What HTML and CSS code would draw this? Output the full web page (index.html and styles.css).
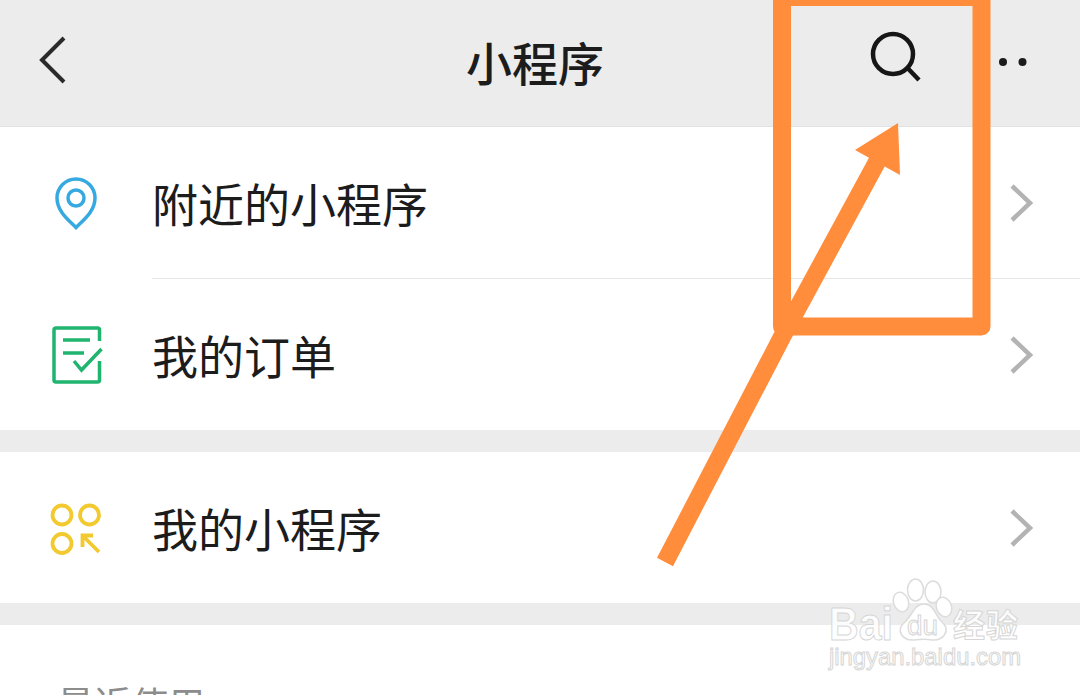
FILE: index.html
```html
<!DOCTYPE html>
<html lang="zh-CN">
<head>
<meta charset="utf-8">
<title>小程序</title>
<link rel="stylesheet" href="styles.css">
</head>
<body>
<div class="screen">
  <header class="topbar">
    <svg class="back" viewBox="0 0 60 60"><path d="M34 8 12 30l22 22"/></svg>
    <h1 class="title">小程序</h1>
    <svg class="search" viewBox="0 0 60 60"><circle cx="28" cy="27" r="20"/><path d="M42.500 41 54 53"/></svg>
    <svg class="more" viewBox="0 0 40 20"><circle cx="9" cy="10" r="4"/><circle cx="28.500" cy="10" r="4"/></svg>
  </header>

  <section class="group">
    <div class="row row-first">
      <svg class="icon icon-pin" viewBox="0 0 60 60"><path d="M30 53.500 C24 47 11 38 11 24 A19 19 0 0 1 49 24 C49 38 36 47 30 53.500Z"/><circle cx="30" cy="24" r="8"/></svg>
      <div class="row-body row-body-line"><span class="label">附近的小程序</span><svg class="chev" viewBox="0 0 30 40"><path d="M6 3 24 20 6 37"/></svg></div>
    </div>
    <div class="row">
      <svg class="icon icon-order" viewBox="0 0 60 60"><path d="M53.500 16V5a2 2 0 0 0-2-2H10A2 2 0 0 0 8 5v50a2 2 0 0 0 2 2h41.500a2 2 0 0 0 2-2V36"/><path d="M17 15H44M17 28H38"/><path d="M28 36 35.500 45 55.500 24"/></svg>
      <div class="row-body"><span class="label">我的订单</span><svg class="chev" viewBox="0 0 30 40"><path d="M6 3 24 20 6 37"/></svg></div>
    </div>
  </section>

  <section class="group">
    <div class="row">
      <svg class="icon icon-mine" viewBox="0 0 60 60"><circle cx="16" cy="17" r="9.500"/><circle cx="43.500" cy="17" r="9.500"/><circle cx="16" cy="45.500" r="9.500"/><path d="M53 54 38 39M36.500 49V37.500H47"/></svg>
      <div class="row-body"><span class="label">我的小程序</span><svg class="chev" viewBox="0 0 30 40"><path d="M6 3 24 20 6 37"/></svg></div>
    </div>
  </section>

  <section class="recent"><span class="recent-label">最近使用</span></section>

  <svg class="watermark" viewBox="0 0 1080 695">
    <g class="wm-paw">
      <ellipse cx="915.500" cy="590" rx="8" ry="11"/>
      <ellipse cx="933" cy="592" rx="8" ry="11"/>
      <ellipse cx="901" cy="602" rx="7.500" ry="10" transform="rotate(-20 901 602)"/>
      <ellipse cx="944" cy="607" rx="7.500" ry="10" transform="rotate(-20 944 607)"/>
      <path d="M924 604C934 604 936 617 942 622 952 631 942 641 932 640 926 639 921 639 914 640 904 641 894 631 905 622 912 616 914 604 924 604Z"/>
    </g>
    <text class="wm-text wm-bold" x="829" y="640" textLength="64" lengthAdjust="spacingAndGlyphs">Bai</text>
    <text class="wm-text wm-du" x="907" y="635" textLength="31" lengthAdjust="spacingAndGlyphs">du</text>
    <text class="wm-text wm-cjk" x="953" y="637" textLength="65">经验</text>
    <text class="wm-text wm-url" x="829" y="665" textLength="192" lengthAdjust="spacingAndGlyphs">jingyan.baidu.com</text>
  </svg>

  <svg class="annotation" viewBox="0 0 1080 695">
    <path class="ann-box" d="M782 -3H981.500V326.500H782Z"/>
    <path class="ann-line" d="M665 562 783 335 878 160"/>
    <path class="ann-head" d="M898 123 855 150 900 175Z"/>
  </svg>
</div>
</body>
</html>
```
FILE: styles.css
```css
* { box-sizing: border-box; }
html, body { margin: 0; padding: 0; }
body {
  width: 1080px;
  height: 695px;
  overflow: hidden;
  background: #ececec;
  font-family: "Noto Sans CJK SC", "Noto Sans", sans-serif;
  color: #1c1c1c;
}
.screen {
  position: relative;
  width: 1080px;
  height: 695px;
  overflow: hidden;
  display: flex;
  flex-direction: column;
}
.topbar {
  position: relative;
  flex: none;
  height: 127px;
  border-bottom: 1px solid #e2e2e2;
  background: #ececec;
  display: flex;
  align-items: center;
}
.title {
  position: absolute;
  left: 0;
  right: 0;
  top: 28px;
  margin: 0 0 0 -10px;
  text-align: center;
  font-size: 46px;
  line-height: 66px;
  font-weight: 500;
  color: #1c1c1c;
}
.back {
  flex: none;
  width: 60px;
  height: 60px;
  margin-left: 30px;
  margin-top: -6px;
  fill: none;
  stroke: #2a2a2a;
  stroke-width: 4;
}
.search {
  flex: none;
  width: 60px;
  height: 60px;
  margin-left: 775px;
  margin-top: -13px;
  fill: none;
  stroke: #161616;
  stroke-width: 4.500;
}
.more {
  flex: none;
  width: 40px;
  height: 20px;
  margin-left: 69px;
  margin-top: -3px;
  fill: #1c1c1c;
}
.group {
  flex: none;
  background: #fff;
  margin-bottom: 22px;
}
.row {
  height: 151px;
  display: flex;
  align-items: center;
  padding-left: 46px;
}
.row-first { height: 152px; }
.row-body {
  flex: 1;
  height: 100%;
  margin-left: 46px;
  padding-right: 44px;
  display: flex;
  align-items: center;
  justify-content: space-between;
}
.row-body-line {
  border-bottom: 1px solid #e6e6e6;
}
.icon {
  flex: none;
  width: 60px;
  height: 60px;
  fill: none;
  stroke-width: 3.500;
}
.icon-pin { stroke: #35a9e0; margin-top: 1px; }
.icon-order { stroke: #1fb56f; margin-top: 1px; }
.icon-mine { stroke: #f2c92e; stroke-width: 3.800; }
.label {
  font-size: 46px;
  line-height: 66px;
  color: #1c1c1c;
  margin-bottom: 2px;
}
.chev {
  flex: none;
  width: 30px;
  height: 40px;
  fill: none;
  stroke: #b3b3b3;
  stroke-width: 4.500;
}
.recent {
  flex: 1;
  background: #fff;
  padding: 51px 0 0 57px;
}
.recent-label {
  display: block;
  font-size: 37px;
  line-height: 54px;
  color: #8c8c8c;
}
.watermark, .annotation {
  position: absolute;
  left: 0;
  top: 0;
  width: 1080px;
  height: 695px;
  pointer-events: none;
}
.wm-paw ellipse, .wm-paw path {
  fill: #fff;
  stroke: #dcdcdc;
  stroke-width: 1.500;
}
.wm-text {
  fill: rgba(255, 255, 255, 0.9);
  stroke: #d6d6d6;
  stroke-width: 1;
  font-family: "Liberation Sans", sans-serif;
}
.wm-bold { font-size: 46px; font-weight: 700; }
.wm-du { font-size: 27px; }
.wm-cjk { font-size: 32px; font-weight: 700; font-family: "Noto Sans CJK SC", sans-serif; }
.wm-url { font-size: 24px; }
.ann-box {
  fill: none;
  stroke: #ff8d3c;
  stroke-width: 18;
  stroke-linejoin: round;
}
.ann-line {
  fill: none;
  stroke: #ff8d3c;
  stroke-width: 18;
}
.ann-head { fill: #ff8d3c; }
```
